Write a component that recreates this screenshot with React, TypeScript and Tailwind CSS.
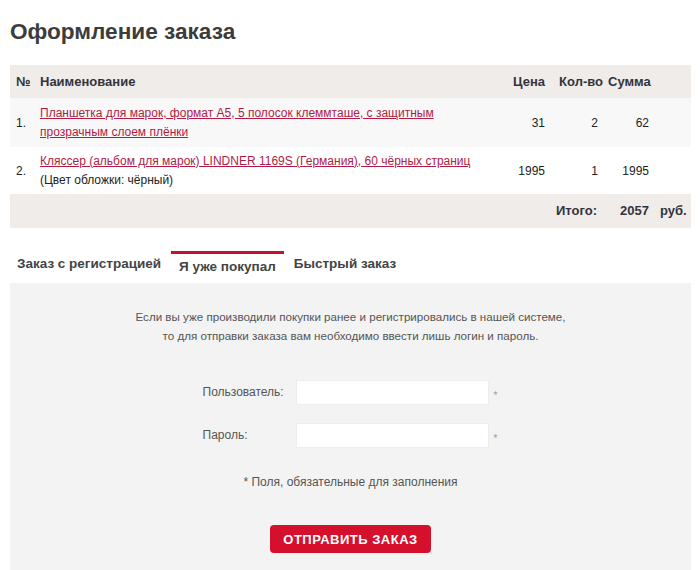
// Оформление заказа – вход для уже покупавших
const items = [
  {
    n: "1.",
    title: "Планшетка для марок, формат А5, 5 полосок клеммташе, с защитным прозрачным слоем плёнки",
    note: "",
    price: 31,
    qty: 2,
    sum: 62,
    bg: "bg-[#f8f8f8]",
    h: "h-[49px]",
  },
  {
    n: "2.",
    title: "Кляссер (альбом для марок) LINDNER 1169S (Германия), 60 чёрных страниц",
    note: "(Цвет обложки: чёрный)",
    price: 1995,
    qty: 1,
    sum: 1995,
    bg: "bg-white",
    h: "h-[47px]",
  },
];

const cols = "grid grid-cols-[26px_1fr_60px_58px_46px_37px] items-center";

export default function App() {
  return (
    <div
      className="w-[700px] h-[570px] overflow-hidden bg-white pl-[10px] pr-[9px] pt-[18px] text-[#333]"
      style={{ fontFamily: '"Liberation Sans", Arial, sans-serif' }}
    >
      <h1 className="text-[22.6px] leading-[28px] font-bold text-[#3c3c3c] mb-[19px]">Оформление заказа</h1>

      {/* Table */}
      <div className="text-[12px]">
        <div className={`${cols} h-[33px] bg-[#efecea] text-[13px] font-bold text-[#34343c]`}>
          <span className="pl-[6px]">№</span>
          <span className="pl-[4px]">Наименование</span>
          <span className="text-right pr-[5px]">Цена</span>
          <span className="text-right pr-[5px]">Кол-во</span>
          <span className="text-right pr-[5px]">Сумма</span>
          <span />
        </div>

        {items.map(it => (
          <div key={it.n} className={`${cols} ${it.h} ${it.bg}`}>
            <span className="pl-[6px] text-[#222]">{it.n}</span>
            <div className="pl-[4px] leading-[19px]">
              <a href="#" className="text-[#b01c45] underline">{it.title}</a>
              {it.note && <div className="text-[#222]">{it.note}</div>}
            </div>
            <span className="text-right pr-[5px] text-[#222]">{it.price}</span>
            <span className="text-right pr-[10px] text-[#222]">{it.qty}</span>
            <span className="text-right pr-[5px] text-[#222]">{it.sum}</span>
            <span />
          </div>
        ))}

        <div className={`${cols} h-[34px] bg-[#efecea] text-[13px] font-bold text-[#34343c]`}>
          <span />
          <span />
          <span />
          <span className="text-right pr-[11px]">Итого:</span>
          <span className="text-right pr-[5px]">2057</span>
          <span className="pl-[6px]">руб.</span>
        </div>
      </div>

      {/* Tabs */}
      <div className="mt-[23px] flex h-[32px] items-start text-[13.5px] leading-[16px] font-bold text-[#444]">
        <div className="pl-[7px] pr-[10px] pt-[5px]">Заказ с регистрацией</div>
        <div className="h-full border-t-[3px] border-[#c8102e] bg-white px-[8px] pt-[5px]">Я уже покупал</div>
        <div className="px-[10px] pt-[5px]">Быстрый заказ</div>
      </div>

      {/* Panel */}
      <div className="h-[300px] bg-[#f3f3f3] pt-[24px] text-[12px] leading-[19px] text-[#555]">
        <p className="text-center text-[11.6px]">
          Если вы уже производили покупки ранее и регистрировались в нашей системе,
          <br />
          то для отправки заказа вам необходимо ввести лишь логин и пароль.
        </p>

        <div className="mt-[35px] flex flex-col items-center gap-[18px]">
          {["Пользователь:", "Пароль:"].map(label => (
            <div key={label} className="flex items-center">
              <span className="w-[93px]">{label}</span>
              <input
                type={label === "Пароль:" ? "password" : "text"}
                className="w-[193px] h-[25px] bg-white border border-[#ededed] outline-none"
              />
              <span className="w-[10px] pl-[5px] pt-[6px] text-[10px] text-[#999]">*</span>
            </div>
          ))}
        </div>

        <p className="mt-[25px] text-center">* Поля, обязательные для заполнения</p>

        <div className="mt-[33px] flex justify-center">
          <button className="w-[161px] h-[28px] rounded-[4px] bg-[#d5102d] text-[13px] font-bold tracking-[0.5px] text-white">
            ОТПРАВИТЬ ЗАКАЗ
          </button>
        </div>
      </div>
    </div>
  );
}
